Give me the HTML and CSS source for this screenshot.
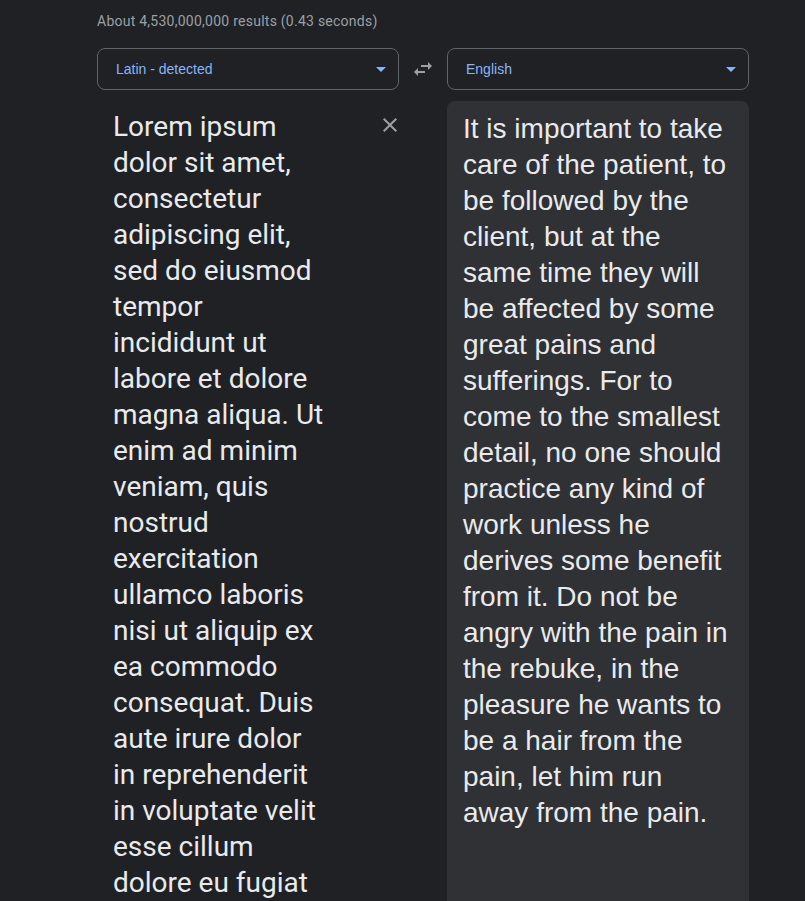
FILE: index.html
```html
<!DOCTYPE html>
<html lang="en">
<head>
<meta charset="utf-8">
<title>Translate</title>
<link rel="stylesheet" href="styles.css">
</head>
<body>
<main class="page">
  <div class="stats">About 4,530,000,000 results (0.43 seconds)</div>
  <div class="translator">
    <div class="lang-select">
      <span class="lang-name">Latin - detected</span>
      <svg class="drop" viewBox="0 0 24 24" width="24" height="24"><path d="M7 10l5 5 5-5z"/></svg>
    </div>
    <div class="swap">
      <svg viewBox="0 0 24 24" width="24" height="24"><path d="M6.99 11L3 15l3.99 4v-3H14v-2H6.99v-3zM21 9l-3.99-4v3H10v2h7.01v3L21 9z"/></svg>
    </div>
    <div class="lang-select">
      <span class="lang-name">English</span>
      <svg class="drop" viewBox="0 0 24 24" width="24" height="24"><path d="M7 10l5 5 5-5z"/></svg>
    </div>

    <div class="source">
      <div class="source-text">Lorem ipsum
dolor sit amet,
consectetur
adipiscing elit,
sed do eiusmod
tempor
incididunt ut
labore et dolore
magna aliqua. Ut
enim ad minim
veniam, quis
nostrud
exercitation
ullamco laboris
nisi ut aliquip ex
ea commodo
consequat. Duis
aute irure dolor
in reprehenderit
in voluptate velit
esse cillum
dolore eu fugiat</div>
      <svg class="clear" viewBox="0 0 24 24" width="24" height="24"><path d="M19 6.41L17.59 5 12 10.59 6.41 5 5 6.41 10.59 12 5 17.59 6.41 19 12 13.41 17.59 19 19 17.59 13.41 12z"/></svg>
    </div>
    <div></div>
    <div class="target">It is important to take care of the patient, to be followed by the client, but at the same time they will be affected by some great pains and sufferings. For to come to the smallest detail, no one should practice any kind of work unless he derives some benefit from it. Do not be angry with the pain in the rebuke, in the pleasure he wants to be a hair from the pain, let him run away from the pain.</div>
  </div>
</main>
</body>
</html>
```

FILE: styles.css
```css
html, body {
  margin: 0;
  padding: 0;
  background: #202124;
  overflow: hidden;
  height: 100%;
}

.page {
  padding: 0 0 0 97px;
  font-family: "Liberation Sans", Arial, sans-serif;
}

.stats {
  padding-top: 10px;
  height: 22px;
  line-height: 22px;
  font-family: Roboto, "Liberation Sans", sans-serif;
  font-size: 14px;
  letter-spacing: 0.25px;
  color: #9aa0a6;
  margin-bottom: 16px;
}

.translator {
  display: grid;
  grid-template-columns: 302px 48px 302px;
  grid-template-rows: 42px auto;
  row-gap: 11px;
}

.lang-select {
  box-sizing: border-box;
  height: 42px;
  border: 1px solid #5f6368;
  border-radius: 8px;
  display: flex;
  align-items: center;
  justify-content: space-between;
  padding: 0 5px 0 18px;
}

.lang-name {
  font-size: 14px;
  color: #8ab4f8;
}

.drop {
  fill: #8ab4f8;
}

.swap {
  display: flex;
  align-items: center;
  justify-content: center;
}

.swap svg {
  fill: #9aa0a6;
}

.source {
  display: flex;
  align-items: flex-start;
  padding: 8px 0 0 16px;
}

.source-text {
  flex: 1;
  white-space: pre-line;
  font-family: Roboto, "Noto Sans", sans-serif;
  font-size: 28px;
  line-height: 36px;
  color: #e8eaed;
}

.clear {
  fill: #9aa0a6;
  margin: 4px -3px 0 0;
  flex: none;
}

.target {
  background: #303134;
  border-radius: 8px;
  padding: 10px 18px 0 16px;
  height: 900px;
  font-size: 28px;
  line-height: 36px;
  color: #e8eaed;
}
```
